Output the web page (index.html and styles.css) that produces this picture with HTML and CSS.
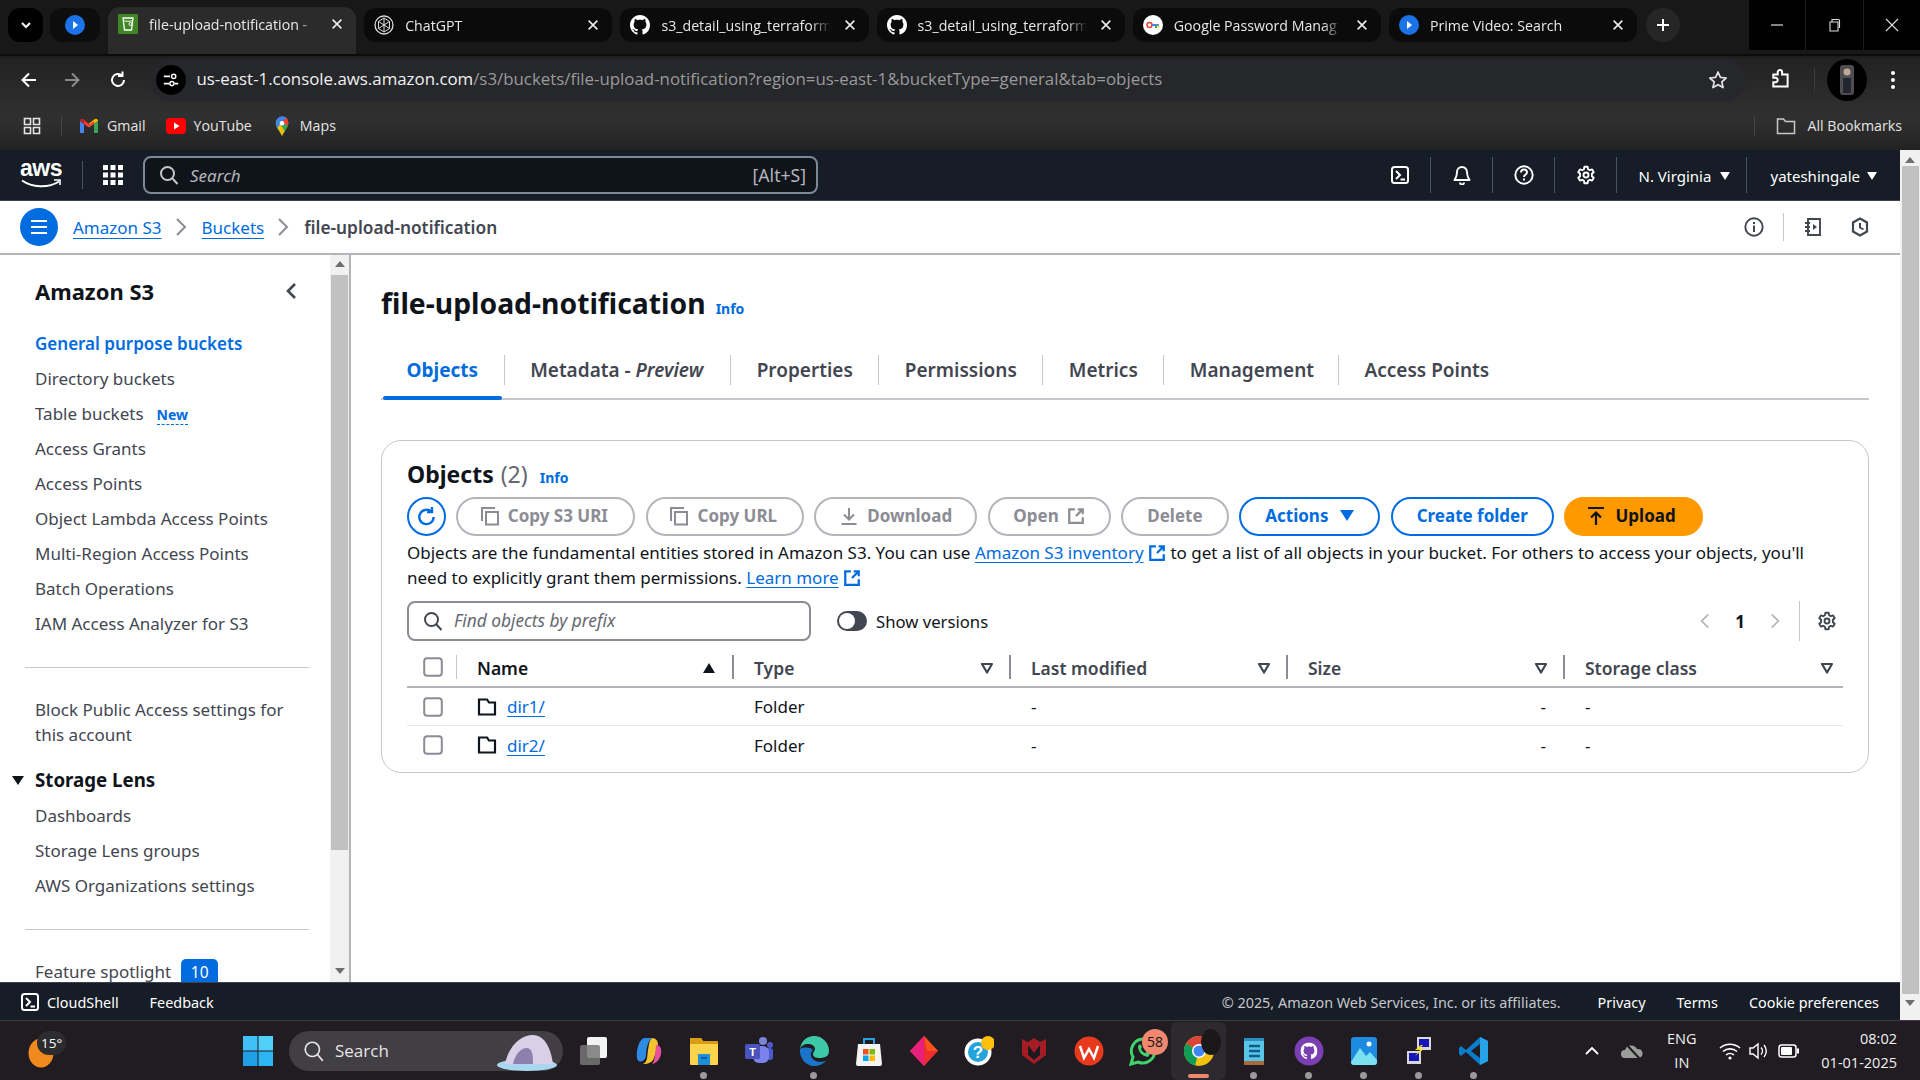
FILE: index.html
```html
<!DOCTYPE html>
<html lang="en">
<head>
<meta charset="utf-8">
<title>file-upload-notification</title>
<link rel="stylesheet" href="styles.css">
</head>
<body>
<svg class="sprite" aria-hidden="true">
  <symbol id="x" viewBox="0 0 16 16"><path d="M3 3l10 10M13 3L3 13" fill="none" stroke="currentColor" stroke-width="1.8"/></symbol>
  <symbol id="gh" viewBox="0 0 16 16"><path fill="currentColor" d="M8 0C3.58 0 0 3.58 0 8c0 3.54 2.29 6.53 5.47 7.59.4.07.55-.17.55-.38 0-.19-.01-.82-.01-1.49-2.01.37-2.53-.49-2.69-.94-.09-.23-.48-.94-.82-1.13-.28-.15-.68-.52-.01-.53.63-.01 1.08.58 1.23.82.72 1.21 1.87.87 2.33.66.07-.52.28-.87.51-1.07-1.78-.2-3.64-.89-3.64-3.95 0-.87.31-1.59.82-2.15-.08-.2-.36-1.02.08-2.12 0 0 .67-.21 2.2.82.64-.18 1.32-.27 2-.27.68 0 1.36.09 2 .27 1.53-1.04 2.2-.82 2.2-.82.44 1.1.16 1.92.08 2.12.51.56.82 1.27.82 2.15 0 3.07-1.87 3.75-3.65 3.95.29.25.54.73.54 1.48 0 1.07-.01 1.93-.01 2.2 0 .21.15.46.55.38A8.013 8.013 0 0016 8c0-4.42-3.58-8-8-8z"/></symbol>
  <symbol id="prime" viewBox="0 0 20 20"><circle cx="10" cy="10" r="10" fill="#1a73e8"/><path d="M8 6l5 4-5 4z" fill="#fff"/></symbol>
  <symbol id="term" viewBox="0 0 20 20"><rect x="2" y="2" width="16" height="16" rx="2.5" fill="none" stroke="currentColor" stroke-width="2"/><path d="M6 6l4 4-4 4M10.5 14.5H15" fill="none" stroke="currentColor" stroke-width="2"/></symbol>
  <symbol id="gear" viewBox="0 0 20 20"><path d="M8.4 1.8h3.2l.5 2.4 1.7 1 2.3-.8 1.6 2.8-1.8 1.6v2.4l1.8 1.6-1.6 2.8-2.3-.8-1.7 1-.5 2.4H8.4l-.5-2.4-1.7-1-2.3.8-1.6-2.8 1.8-1.6V8.800L2.300 7.200l1.600-2.800 2.300.8 1.700-1z" fill="none" stroke="currentColor" stroke-width="1.900" stroke-linejoin="round"/><circle cx="10" cy="10" r="2.500" fill="none" stroke="currentColor" stroke-width="1.900"/></symbol>
  <symbol id="ext" viewBox="0 0 16 16"><path d="M7 2H2v12h12V9M9.500 2H14v4.500M14 2L8 8" fill="none" stroke="currentColor" stroke-width="2"/></symbol>
  <symbol id="copy" viewBox="0 0 20 20"><path d="M2 15V2h13" fill="none" stroke="currentColor" stroke-width="2"/><rect x="6" y="6" width="12" height="12.500" fill="none" stroke="currentColor" stroke-width="2"/></symbol>
  <symbol id="filter" viewBox="0 0 14 12"><path d="M2 2h10L7 10.500z" fill="none" stroke="currentColor" stroke-width="2.200" stroke-linejoin="round"/></symbol>
  <symbol id="folder" viewBox="0 0 20 20"><path d="M2 2.500h8l2 3h6v12H2z" fill="none" stroke="currentColor" stroke-width="2.200"/></symbol>
  <symbol id="check" viewBox="0 0 20 20"><rect x="1.200" y="1.200" width="17.600" height="17.600" rx="3" fill="#fff" stroke="#8c8c94" stroke-width="2"/></symbol>
  <symbol id="chev" viewBox="0 0 12 20"><path d="M2 2l8 8-8 8" fill="none" stroke="currentColor" stroke-width="2"/></symbol>
</svg>

<header class="chrome">
  <div class="tabstrip">
    <div class="tabmenu"><svg viewBox="0 0 12 12" class="i12"><path d="M2 4l4 4 4-4" fill="none" stroke="#fff" stroke-width="2"/></svg></div>
    <div class="pintab"><svg class="i20"><use href="#prime"/></svg></div>
    <div class="tab active">
      <svg class="fav" viewBox="0 0 20 20"><rect width="20" height="20" rx="1" fill="#3f8624"/><path d="M5 4h10l-1.500 12h-7z" fill="none" stroke="#fff" stroke-width="1.300"/><path d="M5 6.500c3 1 7 1 10 0" fill="none" stroke="#fff"/><circle cx="12.500" cy="10" r="1.500" fill="none" stroke="#fff"/></svg>
      <span class="tabtitle">file-upload-notification - </span>
      <svg class="i14"><use href="#x"/></svg>
    </div>
    <div class="tab">
      <svg class="fav" viewBox="0 0 20 20"><circle cx="10" cy="10" r="9" fill="none" stroke="#ddd" stroke-width="1.300"/><path d="M10 3l5.500 3.500v7L10 17l-5.500-3.500v-7zM4.500 6.500L15.500 13.500M15.500 6.500L4.500 13.500M10 3v14" fill="none" stroke="#ddd"/></svg>
      <span class="tabtitle">ChatGPT</span>
      <svg class="i14"><use href="#x"/></svg>
    </div>
    <div class="tab">
      <svg class="fav"><use href="#gh"/></svg>
      <span class="tabtitle">s3_detail_using_terraform</span>
      <svg class="i14"><use href="#x"/></svg>
    </div>
    <div class="tab">
      <svg class="fav"><use href="#gh"/></svg>
      <span class="tabtitle">s3_detail_using_terraform</span>
      <svg class="i14"><use href="#x"/></svg>
    </div>
    <div class="tab">
      <svg class="fav" viewBox="0 0 20 20"><circle cx="10" cy="10" r="10" fill="#fff"/><circle cx="6.500" cy="10" r="2.500" fill="none" stroke="#ea4335" stroke-width="1.500"/><path d="M9 10h7" stroke="#4285f4" stroke-width="2"/><path d="M13 10v3" stroke="#34a853" stroke-width="2"/><path d="M15.500 10v2.500" stroke="#fbbc04" stroke-width="1.500"/></svg>
      <span class="tabtitle">Google Password Manag</span>
      <svg class="i14"><use href="#x"/></svg>
    </div>
    <div class="tab">
      <svg class="fav"><use href="#prime"/></svg>
      <span class="tabtitle">Prime Video: Search</span>
      <svg class="i14"><use href="#x"/></svg>
    </div>
    <div class="newtab"><svg viewBox="0 0 14 14" class="i14"><path d="M7 1v12M1 7h12" stroke="#fff" stroke-width="2"/></svg></div>
    <div class="winctl">
      <span class="winbtn"><svg viewBox="0 0 14 14" class="i14"><path d="M1 7h12" stroke="#ddd" stroke-width="1.200"/></svg></span>
      <span class="winbtn"><svg viewBox="0 0 14 14" class="i14"><path d="M3 4h8v9H3zM5 4V1.500h6.500a1 1 0 011 1V10" fill="none" stroke="#ddd" stroke-width="1.100"/></svg></span>
      <span class="winbtn"><svg viewBox="0 0 14 14" class="i14"><path d="M1 1l12 12M13 1L1 13" stroke="#ddd" stroke-width="1.100"/></svg></span>
    </div>
  </div>
  <div class="addressrow">
    <svg class="navicon" viewBox="0 0 20 20"><path d="M17 10H4M10 3.500L3.500 10l6.500 6.500" fill="none" stroke="#fff" stroke-width="2"/></svg>
    <svg class="navicon" viewBox="0 0 20 20"><path d="M3 10h13M10 3.500l6.500 6.500-6.500 6.500" fill="none" stroke="#8b8b8b" stroke-width="2"/></svg>
    <svg class="navicon" viewBox="0 0 20 20"><path d="M16 10a6 6 0 11-2-4.500M14.500 1.500v4.500H10" fill="none" stroke="#fff" stroke-width="2"/></svg>
    <div class="omnibox">
      <span class="sitectl"><svg viewBox="0 0 20 20" class="i18"><path d="M2 6h7M14 14h4M2 14h6" stroke="#fff" stroke-width="1.800"/><circle cx="13" cy="6" r="2.300" fill="none" stroke="#fff" stroke-width="1.600"/><circle cx="11" cy="14" r="2.300" fill="none" stroke="#fff" stroke-width="1.600"/></svg></span>
      <span class="url"><b>us-east-1.console.aws.amazon.com</b>/s3/buckets/file-upload-notification?region=us-east-1&amp;bucketType=general&amp;tab=objects</span>
      <svg class="star" viewBox="0 0 20 20"><path d="M10 2l2.400 5.400 5.800.6-4.400 3.900 1.300 5.700L10 14.700l-5.100 2.900 1.300-5.700L1.800 8l5.800-.6z" fill="none" stroke="#e4e4e4" stroke-width="1.700" stroke-linejoin="round"/></svg>
    </div>
    <svg class="puzzle" viewBox="0 0 20 20"><path d="M3 5h4V3a2 2 0 014 0v2h5v11H3v-4h2a2 2 0 000-4H3z" fill="none" stroke="#fff" stroke-width="1.800"/></svg>
    <span class="vsep"></span>
    <span class="avatar"><svg viewBox="0 0 14 30" class="avatar-img"><rect width="14" height="30" rx="3" fill="#4d4d52"/><circle cx="7" cy="7" r="3.500" fill="#c0a898"/><path d="M3 13h8v15H3z" fill="#23262e"/></svg></span>
    <svg class="kebab" viewBox="0 0 4 20"><circle cx="2" cy="3" r="2" fill="#fff"/><circle cx="2" cy="10" r="2" fill="#fff"/><circle cx="2" cy="17" r="2" fill="#fff"/></svg>
  </div>
  <div class="bookmarks">
    <svg class="appsicon" viewBox="0 0 18 18"><path d="M1.500 1.500h6v6h-6zM10.500 1.500h6v6h-6zM1.500 10.500h6v6h-6zM10.500 10.500h6v6h-6z" fill="none" stroke="#e5e5e5" stroke-width="1.600"/></svg>
    <span class="bmsep"></span>
    <span class="bm bmfirst"><svg viewBox="0 0 20 16" class="bmi"><path d="M1 15V3l4 3v9z" fill="#4285f4"/><path d="M19 15V3l-4 3v9z" fill="#34a853"/><path d="M1 3c0-2 2-3 3.500-1.800L10 5.500l-1 3.500L1 3z" fill="#c5221f"/><path d="M19 3c0-2-2-3-3.500-1.800L10 5.500V9l9-6z" fill="#fbbc04"/><path d="M5 6l5 3.500L15 6v-3l-5 3.500L5 3z" fill="#ea4335"/></svg>Gmail</span>
    <span class="bm"><svg viewBox="0 0 20 16" class="bmi"><rect width="20" height="16" rx="4" fill="#f00"/><path d="M8 4.500l5.500 3.500L8 11.500z" fill="#fff"/></svg>YouTube</span>
    <span class="bm"><svg viewBox="0 0 16 22" class="bmi"><path d="M8 22C4 15 1 12 1 8a7 7 0 0114 0c0 4-3 7-7 14z" fill="#34a853"/><path d="M3 3a7 7 0 0110-1L3 13C1.500 10.500 .5 6 3 3z" fill="#4285f4"/><path d="M13 2a7 7 0 012 6c0 1-.3 2-.8 3L8 6z" fill="#ea4335"/><path d="M3 13c1.500 2.500 3.500 5 5 9 1-2.500 2-4 3-5.500L6 9z" fill="#fbbc04"/><circle cx="8" cy="8" r="2.500" fill="#fff"/></svg>Maps</span>
    <span class="bmspace"></span>
    <span class="bmsep"></span>
    <span class="bm allbm"><svg viewBox="0 0 20 18" class="bmf"><path d="M1.500 2h6l2 2.500h9v12h-17z" fill="none" stroke="#c8c8c8" stroke-width="1.500"/></svg>All Bookmarks</span>
  </div>
</header>

<div class="viewport">
  <div class="page">
    <div class="awsbar">
      <div class="awslogo"><span class="awsword">aws</span><svg viewBox="0 0 40 10" class="smile"><path d="M1 1.500c10 7 26 8 37 1" fill="none" stroke="#fff" stroke-width="2"/><path d="M33 1h6v5" fill="none" stroke="#fff" stroke-width="1.600"/></svg></div>
      <span class="hsep logosep"></span>
      <svg class="waffle" viewBox="0 0 20 20"><path fill="#fff" d="M0 0h5v5H0zM7.500 0h5v5h-5zM15 0h5v5h-5zM0 7.500h5v5H0zM7.500 7.500h5v5h-5zM15 7.500h5v5h-5zM0 15h5v5H0zM7.500 15h5v5h-5zM15 15h5v5h-5z"/></svg>
      <div class="awssearch">
        <svg class="i20 s-ic" viewBox="0 0 20 20"><circle cx="8.500" cy="8.500" r="6.500" fill="none" stroke="#c6c6cd" stroke-width="2"/><path d="M13 13l5.500 6" stroke="#c6c6cd" stroke-width="2"/></svg>
        <span class="s-text">Search</span>
        <span class="s-key">[Alt+S]</span>
      </div>
      <div class="awsright">
        <span class="hbtn"><svg class="i20"><use href="#term"/></svg></span>
        <span class="hbtn"><svg class="i20" viewBox="0 0 20 20"><path d="M10 2a5 5 0 00-5 5c0 5-2 7-2.500 8h15C17 14 15 12 15 7a5 5 0 00-5-5zM8 17.500a2 2 0 004 0" fill="none" stroke="#fff" stroke-width="1.900" stroke-linejoin="round"/></svg></span>
        <span class="hbtn"><svg class="i20" viewBox="0 0 20 20"><circle cx="10" cy="10" r="8.700" fill="none" stroke="#fff" stroke-width="1.900"/><path d="M7 7.500a3 3 0 116 0c0 2-3 2-3 4.500M10 13.500v2" fill="none" stroke="#fff" stroke-width="1.900"/></svg></span>
        <span class="hbtn"><svg class="i20"><use href="#gear"/></svg></span>
        <span class="hmenu region">N. Virginia<i class="caret"></i></span>
        <span class="hmenu user">yateshingale<i class="caret"></i></span>
      </div>
    </div>

    <div class="crumbbar">
      <span class="burger"><svg viewBox="0 0 20 16" class="i20b"><path d="M2 2h16M2 8h16M2 14h16" stroke="#fff" stroke-width="2.200"/></svg></span>
      <a class="clink">Amazon S3</a>
      <svg class="cchev"><use href="#chev"/></svg>
      <a class="clink">Buckets</a>
      <svg class="cchev"><use href="#chev"/></svg>
      <span class="ccur">file-upload-notification</span>
      <div class="crumbright">
        <svg class="i20 cr-a" viewBox="0 0 20 20"><circle cx="10" cy="10" r="8.700" fill="none" stroke="#424650" stroke-width="1.900"/><path d="M10 8.500V15M10 5v2" stroke="#424650" stroke-width="2"/></svg>
        <span class="crsep"></span>
        <svg class="i20 cr-b" viewBox="0 0 20 20"><path d="M5 2h12v16H5zM2 6h5M2 10h5M2 14h5" fill="none" stroke="#424650" stroke-width="1.900"/><path d="M10 7l4 3-4 3z" fill="#424650"/></svg>
        <svg class="i20 cr-c" viewBox="0 0 20 20"><path d="M10 1.500l7 4v9l-7 4-7-4v-9z" fill="none" stroke="#424650" stroke-width="2.200"/><path d="M10 6v4.500l3.500 2" fill="none" stroke="#424650" stroke-width="2"/></svg>
      </div>
    </div>

    <div class="workspace">
      <aside class="sidenav">
        <div class="navpane">
          <div class="navhead"><span class="navtitle">Amazon S3</span><svg class="navclose" viewBox="0 0 12 20"><path d="M10 3L3 10l7 7" fill="none" stroke="#424650" stroke-width="2.600"/></svg></div>
          <ul class="navlist first">
            <li class="cur">General purpose buckets</li>
            <li>Directory buckets</li>
            <li>Table buckets<span class="newtag">New</span></li>
            <li>Access Grants</li>
            <li>Access Points</li>
            <li>Object Lambda Access Points</li>
            <li>Multi-Region Access Points</li>
            <li>Batch Operations</li>
            <li>IAM Access Analyzer for S3</li>
          </ul>
          <hr class="navdiv d1">
          <p class="navblock">Block Public Access settings for this account</p>
          <div class="navsec"><i class="sectri"></i>Storage Lens</div>
          <ul class="navlist lens">
            <li>Dashboards</li>
            <li>Storage Lens groups</li>
            <li>AWS Organizations settings</li>
          </ul>
          <hr class="navdiv d2">
          <div class="navfeat">Feature spotlight<span class="countbadge">10</span></div>
        </div>
        <div class="navscroll"><i class="sb-up"></i><span class="navthumb"></span><i class="sb-down"></i></div>
      </aside>

      <main class="content">
        <div class="titlerow"><h1>file-upload-notification</h1><a class="info">Info</a></div>
        <nav class="tabs">
          <a class="ctab on">Objects</a>
          <a class="ctab">Metadata - <em>Preview</em></a>
          <a class="ctab">Properties</a>
          <a class="ctab">Permissions</a>
          <a class="ctab">Metrics</a>
          <a class="ctab">Management</a>
          <a class="ctab">Access Points</a>
        </nav>

        <section class="card">
          <div class="cardhead"><h2>Objects</h2><span class="count">(2)</span><a class="info">Info</a></div>
          <div class="actions">
            <span class="btn refresh"><svg viewBox="0 0 20 20" class="i22"><path d="M16 10a6.500 6.500 0 11-2.300-5M14.500 1v4.500H10" fill="none" stroke="#006ce0" stroke-width="2.200"/></svg></span>
            <span class="btn off b-uri"><svg class="i20"><use href="#copy"/></svg>Copy S3 URI</span>
            <span class="btn off b-url"><svg class="i20"><use href="#copy"/></svg>Copy URL</span>
            <span class="btn off b-dl"><svg class="i20" viewBox="0 0 20 20"><path d="M10 2v11M5 8.500l5 5 5-5M2.500 18h15" fill="none" stroke="currentColor" stroke-width="2"/></svg>Download</span>
            <span class="btn off b-open">Open<svg class="i18"><use href="#ext"/></svg></span>
            <span class="btn off b-del">Delete</span>
            <span class="btn blue b-act">Actions<i class="bluecaret"></i></span>
            <span class="btn blue b-new">Create folder</span>
            <span class="btn primary b-up"><svg class="i20" viewBox="0 0 20 20"><path d="M2 2h16M10 19V7M5 11.500l5-5 5 5" fill="none" stroke="#0f141a" stroke-width="2.200"/></svg>Upload</span>
          </div>
          <p class="desc">Objects are the fundamental entities stored in Amazon S3. You can use <a class="dl">Amazon S3 inventory</a> <svg class="i18 linkext"><use href="#ext"/></svg> to get a list of all objects in your bucket. For others to access your objects, you'll<br>need to explicitly grant them permissions. <a class="dl">Learn more</a> <svg class="i18 linkext"><use href="#ext"/></svg></p>
          <div class="filterrow">
            <div class="findbox"><svg class="i20" viewBox="0 0 20 20"><circle cx="8.500" cy="8.500" r="6.500" fill="none" stroke="#424650" stroke-width="2"/><path d="M13 13l5.500 6" stroke="#424650" stroke-width="2"/></svg><span>Find objects by prefix</span></div>
            <span class="toggle"><i></i></span><span class="togglelabel">Show versions</span>
            <div class="pager">
              <svg class="pchev flip"><use href="#chev"/></svg>
              <b>1</b>
              <svg class="pchev"><use href="#chev"/></svg>
              <span class="psep"></span>
              <svg class="i20 pgear"><use href="#gear"/></svg>
            </div>
          </div>
          <div class="table">
            <div class="tr th">
              <div class="c0"><svg class="i20"><use href="#check"/></svg></div>
              <div class="cc strong"><span>Name</span><i class="sortup"></i></div>
              <div class="cc"><span>Type</span><svg class="fi"><use href="#filter"/></svg></div>
              <div class="cc"><span>Last modified</span><svg class="fi"><use href="#filter"/></svg></div>
              <div class="cc"><span>Size</span><svg class="fi"><use href="#filter"/></svg></div>
              <div class="cc lastc"><span>Storage class</span><svg class="fi"><use href="#filter"/></svg></div>
            </div>
            <div class="tr td">
              <div class="c0"><svg class="i20"><use href="#check"/></svg></div>
              <div class="dc"><svg class="i20 ficon"><use href="#folder"/></svg><a class="dl">dir1/</a></div>
              <div class="dc">Folder</div>
              <div class="dc">-</div>
              <div class="dc right">-</div>
              <div class="dc">-</div>
            </div>
            <div class="tr td noline">
              <div class="c0"><svg class="i20"><use href="#check"/></svg></div>
              <div class="dc"><svg class="i20 ficon"><use href="#folder"/></svg><a class="dl">dir2/</a></div>
              <div class="dc">Folder</div>
              <div class="dc">-</div>
              <div class="dc right">-</div>
              <div class="dc">-</div>
            </div>
          </div>
        </section>
      </main>
    </div>

    <footer class="awsfoot">
      <svg class="i20 ft-ic"><use href="#term"/></svg>
      <span class="ft-l">CloudShell</span>
      <span class="ft-l ft-fb">Feedback</span>
      <span class="ft-copy">© 2025, Amazon Web Services, Inc. or its affiliates.</span>
      <span class="ft-r ft-priv">Privacy</span>
      <span class="ft-r">Terms</span>
      <span class="ft-r">Cookie preferences</span>
    </footer>
  </div>
  <div class="pagescroll"><i class="sb-up"></i><span class="pagethumb"></span><i class="sb-down"></i></div>
</div>

<div class="taskbar">
  <div class="weather"><svg viewBox="0 0 26 30" class="wsun"><ellipse cx="13" cy="15" rx="12.500" ry="14.500" fill="#f08a1d"/></svg><span class="temp">15°</span></div>
  <span class="ts-start"><svg viewBox="0 0 30 30" class="tb30"><path d="M0 0h14.500v14.500H0z" fill="#3fc1f5"/><path d="M15.500 0H30v14.500H15.500z" fill="#50d0fb"/><path d="M0 15.500h14.500V30H0z" fill="#1f9fe6"/><path d="M15.500 15.500H30V30H15.500z" fill="#2db4f2"/></svg></span>
  <div class="ts-search">
    <svg class="i22" viewBox="0 0 20 20"><circle cx="8.500" cy="8.500" r="6.500" fill="none" stroke="#e6e6e6" stroke-width="1.500"/><path d="M13 13l5 6" stroke="#e6e6e6" stroke-width="1.500"/></svg>
    <span>Search</span>
    <svg class="bear" viewBox="0 0 64 40"><ellipse cx="32" cy="34" rx="30" ry="6" fill="#a9d8ee"/><path d="M10 33C14 14 26 4 38 4s18 14 20 29z" fill="#d9cfe6"/><path d="M18 33c2-10 8-16 14-16s6 10 6 16z" fill="#8f7fae"/></svg>
  </div>
  <div class="ts-apps">
    <span class="app"><svg viewBox="0 0 30 30" class="tb30"><rect x="8" y="1" width="20" height="21" rx="2" fill="#f3f3f3"/><rect x="1" y="9" width="20" height="20" rx="2" fill="#777" opacity=".85"/></svg></span>
    <span class="app"><svg viewBox="0 0 30 30" class="tb30"><path d="M10 2h8c-4 3-6 10-6 18-1 6-8 8-9 2-1-8 2-18 7-20z" fill="#2f8ae6"/><path d="M18 2c4 0 6 3 6 7l-4 13c-2 6-9 6-11 6 5-2 4-9 5-14s1-9 4-12z" fill="#f4c430"/><path d="M22 9c4 0 6 3 5 9-1 5-4 9-9 10 3-3 3-9 4-19z" fill="#e9509c"/></svg></span>
    <span class="app dot"><svg viewBox="0 0 30 30" class="tb30"><path d="M1 2h11l2 3h15v23a1 1 0 01-1 1H2a1 1 0 01-1-1z" fill="#fbd34c"/><path d="M1 2h11l2 3h15v3H1z" fill="#d99c14"/><rect x="9" y="18" width="12" height="11" fill="#1f8ed6"/><rect x="12" y="21" width="6" height="2" fill="#0b5fa3"/></svg></span>
    <span class="app"><svg viewBox="0 0 30 30" class="tb30"><circle cx="19" cy="5" r="4" fill="#7b83d9"/><circle cx="26" cy="9" r="3" fill="#5059c9"/><rect x="20" y="12" width="9" height="12" rx="3" fill="#5059c9"/><rect x="9" y="10" width="16" height="17" rx="6" fill="#7b83eb"/><rect x="1" y="8" width="15" height="15" rx="1.500" fill="#4b53bc"/><text x="8.500" y="19.500" class="teams">T</text></svg></span>
    <span class="app dot"><svg viewBox="0 0 30 30" class="tb30"><path d="M15 0a15 15 0 0115 15c0 5-4 7-9 7-4 0-7-1-7-4 0-2 2-3 2-5 0-3-3-5-7-5-4 0-7 2-8 5C2 5 8 0 15 0z" fill="#3bc9a6"/><path d="M1 13C0 22 7 30 15 30c5 0 9-2 12-5-3 1-11 2-14-3-2-3-1-6 1-8-3-3-10-3-13-1z" fill="#1a74c9"/></svg></span>
    <span class="app"><svg viewBox="0 0 30 30" class="tb30"><path d="M4 8h22l2 20a2 2 0 01-2 2H4a2 2 0 01-2-2z" fill="#f4f4f4"/><path d="M10 8V3h10v5" fill="none" stroke="#25a0e0" stroke-width="2"/><path d="M9 13h5.500v5.500H9z" fill="#f25022"/><path d="M15.500 13H21v5.500h-5.500z" fill="#7fba00"/><path d="M9 19.500h5.500V25H9z" fill="#00a4ef"/><path d="M15.500 19.500H21V25h-5.500z" fill="#ffb900"/></svg></span>
    <span class="app"><svg viewBox="0 0 30 30" class="tb30"><path d="M15 0l14 15-14 15L1 15z" fill="#ef2d2d"/><path d="M15 0L1 15l14 15z" fill="#e6207b"/><path d="M15 0l14 15H18z" fill="#f7541c"/></svg></span>
    <span class="app"><svg viewBox="0 0 30 30" class="tb30"><circle cx="14" cy="16" r="13.500" fill="#fff"/><circle cx="14" cy="16" r="10" fill="#25a3dc"/><text x="14" y="22" class="helpq">?</text><circle cx="24" cy="7" r="7" fill="#fdbf0c"/></svg></span>
    <span class="app"><svg viewBox="0 0 30 30" class="tb30"><path d="M3 3l6 3 6-4 6 4 6-3v16l-12 9L3 19z" fill="#a51c24"/><path d="M9 9l6 8 6-8v10l-6 5-6-5z" fill="#1d191f"/></svg></span>
    <span class="app"><svg viewBox="0 0 30 30" class="tb30"><circle cx="15" cy="15" r="14.500" fill="#e9391d"/><path d="M6 10l4 12 5-9 5 9 4-12" fill="none" stroke="#fff" stroke-width="2.500"/></svg></span>
    <span class="app"><svg viewBox="0 0 30 30" class="tb30"><path d="M14 3a12 12 0 00-10 18L2 28l7-2A12 12 0 1014 3z" fill="none" stroke="#3ed36b" stroke-width="3"/><path d="M9 10c0 6 4 10 10 11l2-3-3-2-2 1c-2-1-3-2-4-4l1-2-2-3z" fill="#3ed36b"/></svg><span class="wa-badge">58</span></span>
    <span class="app chromeapp"><svg viewBox="0 0 30 30" class="tb30"><circle cx="15" cy="15" r="15" fill="#f4c20d"/><path d="M15 15L2 7.500A15 15 0 0115 0h13a15 15 0 012 15z" fill="#db4437"/><path d="M15 15L2 7.500A15 15 0 0011 29.500z" fill="#0f9d58"/><circle cx="15" cy="15" r="7" fill="#fff"/><circle cx="15" cy="15" r="5.500" fill="#4285f4"/></svg><span class="chromeprof"></span><i class="chromebar"></i></span>
    <span class="app dot"><svg viewBox="0 0 30 30" class="tb30"><rect x="5" y="3" width="20" height="24" fill="#5bc5e8"/><path d="M5 25h20v4H5z" fill="#a96a3a"/><path d="M5 2h20v3H5z" fill="#2a90c4"/><path d="M10 10h11M10 15h11M10 20h11" stroke="#0d5e8b" stroke-width="2.500"/></svg></span>
    <span class="app dot"><svg viewBox="0 0 30 30" class="tb30"><circle cx="15" cy="15" r="14.500" fill="#7a3fb0"/><g transform="translate(6.500 6.500) scale(1.060)"><use href="#gh" width="16" height="16" class="ghwhite"/></g></svg></span>
    <span class="app dot"><svg viewBox="0 0 30 30" class="tb30"><rect x="2" y="1" width="26" height="28" rx="3" fill="#1c8be0"/><path d="M2 26l9-14 6 8 4-4 7 8v2a3 3 0 01-3 3H5a3 3 0 01-3-3z" fill="#7be0f0"/><circle cx="20" cy="8" r="2.500" fill="#fff"/></svg></span>
    <span class="app dot"><svg viewBox="0 0 30 30" class="tb30"><rect x="13" y="1" width="14" height="13" fill="#d8d8d8"/><rect x="15" y="3" width="10" height="8" fill="#1616b8"/><rect x="3" y="15" width="14" height="13" fill="#d8d8d8"/><rect x="5" y="17" width="10" height="8" fill="#1616b8"/><path d="M17 9l-6 5h5l-5 6 9-7h-5l4-4z" fill="#f4e51a"/></svg></span>
    <span class="app dot"><svg viewBox="0 0 30 30" class="tb30"><path d="M21 1l8 4v20l-8 4L7 16l-5 4-2-2v-6l2-2 5 4z" fill="#0a7ccb"/><path d="M21 1l8 4v20l-8 4z" fill="#27a3ea"/><path d="M21 8L12 15l9 7z" fill="#201c22"/></svg></span>
  </div>
  <div class="tray">
    <svg class="tr-caret" viewBox="0 0 14 10"><path d="M1 8l6-6 6 6" fill="none" stroke="#fff" stroke-width="1.800"/></svg>
    <svg class="tr-cloud" viewBox="0 0 24 18"><path d="M5 16a4 4 0 010-8 6.500 6.500 0 0112-1 4.500 4.500 0 012 9z" fill="#9c9c9c"/><path d="M5 1l15 16" stroke="#201c22" stroke-width="2"/></svg>
    <span class="tr-lang">ENG<br>IN</span>
    <svg class="tr-wifi" viewBox="0 0 22 18"><path d="M1 6a15 15 0 0120 0M4 9.500a10.500 10.500 0 0114 0M7 13a6 6 0 018 0" fill="none" stroke="#fff" stroke-width="1.600"/><circle cx="11" cy="16" r="1.600" fill="#fff"/></svg>
    <svg class="tr-vol" viewBox="0 0 22 20"><path d="M2 7h3l5-4v14l-5-4H2z" fill="none" stroke="#fff" stroke-width="1.400"/><path d="M13 6.500a5 5 0 010 7M16 4a9 9 0 010 12" fill="none" stroke="#fff" stroke-width="1.400"/></svg>
    <svg class="tr-bat" viewBox="0 0 22 14"><rect x="1" y="1" width="17" height="12" rx="2.500" fill="none" stroke="#fff" stroke-width="1.500"/><rect x="3" y="3" width="11" height="8" rx="1" fill="#fff"/><rect x="19" y="4.500" width="2" height="5" fill="#fff"/></svg>
    <span class="tr-clock">08:02<br>01-01-2025</span>
  </div>
</div>
</body>
</html>
```
FILE: styles.css
```css
*{box-sizing:border-box}
html,body{margin:0;height:1080px;overflow:hidden}
body{display:flex;flex-direction:column;width:1920px;font-family:"Noto Sans",sans-serif;font-size:17px;color:#0f141a;background:#fff}
.sprite{display:none}
a{color:inherit}
ul{list-style:none;margin:0;padding:0}
.i12{width:12px;height:12px}.i14{width:14px;height:14px}.i18{width:18px;height:18px}.i20{width:20px;height:20px}.i22{width:22px;height:22px}
.i20b{width:20px;height:16px}

/* browser */
.chrome{height:150px;background:linear-gradient(#1c1c1c 0,#1c1c1c 56px,#232323 60px,#303030 120px,#222 150px);color:#e6e6e6;font-family:"Open Sans",sans-serif}
.tabstrip{display:flex;height:56px;align-items:flex-start;padding-top:8px;padding-left:8px;border-bottom:2px solid #0c0c0c;position:relative;background:#181818}
.tabmenu{width:35px;height:34px;background:#000;border-radius:12px;display:flex;align-items:center;justify-content:center;margin-right:7px}
.pintab{width:50px;height:34px;background:#0d0d0d;border-radius:12px;display:flex;align-items:center;justify-content:center;margin-right:8px}
.tab{width:248.2px;flex:none;height:34px;margin-right:8px;border-radius:12px;background:#0b0b0b;display:flex;align-items:center;padding:0 10px;font-size:14.2px;color:#e8e8e8}
.tab.active{height:47px;margin-top:-1px;padding-bottom:13px;background:#2b2b2b;border-radius:12px 12px 0 0}
.fav{width:20px;height:20px;flex:none;margin-right:11px;color:#fff}
.tabtitle{flex:1;white-space:nowrap;overflow:hidden;-webkit-mask-image:linear-gradient(90deg,#000 88%,transparent);mask-image:linear-gradient(90deg,#000 88%,transparent)}
.tab .i14{flex:none;margin:0 2px 0 12px;color:#eee}
.newtab{width:34px;height:34px;border-radius:50%;background:#262626;display:flex;align-items:center;justify-content:center;margin-left:1px;flex:none}
.winctl{position:absolute;right:0;top:0;height:50px;width:172px;background:#000;display:flex}
.winbtn{flex:1;display:flex;align-items:center;justify-content:center;border-left:1px solid #1c1c1c}
.addressrow{height:47px;display:flex;align-items:center;padding-left:19px}
.navicon{width:20px;height:20px;margin-right:23px;flex:none}
.navicon:nth-child(2){margin-right:26px}
.navicon:nth-child(3){margin-right:22px}
.omnibox{width:1596px;height:42px;border-radius:21px;background:#25272b;display:flex;align-items:center;padding:0 18px 0 6px;flex:none}
.sitectl{width:30px;height:30px;border-radius:50%;background:#000;display:flex;align-items:center;justify-content:center;margin-right:10.5px}
.url{flex:1;font-size:16.85px;color:#9a9a9a;white-space:nowrap;overflow:hidden;padding-bottom:2px}
.url b{font-weight:400;color:#f0f0f0}
.star{width:20px;height:20px}
.puzzle{width:22px;height:24px;margin-left:24px}
.vsep{width:1px;height:24px;background:#3c3c3c;margin-left:22px}
.avatar{width:40px;height:42px;border-radius:50%;background:#000;display:flex;align-items:center;justify-content:center;margin-left:12px}
.avatar-img{width:14px;height:30px}
.kebab{width:4px;height:20px;margin-left:24px}
.bookmarks{height:47px;display:flex;align-items:center;padding:0 0 2px 23px;font-size:14.2px;color:#e4e4e4}
.appsicon{width:18px;height:18px;margin-right:20px}
.bmsep{width:1px;height:20px;background:#444}
.bm{display:flex;align-items:center;margin-left:20px}
.bmfirst{margin-left:17px}
.bmi{width:20px;height:20px;margin-right:8px}
.bmspace{flex:1}
.bookmarks .allbm{margin-left:21px;margin-right:18px}
.bmf{width:20px;height:18px;margin-right:11px}

/* page */
.viewport{height:870px;display:flex}
.page{width:1900px;display:flex;flex-direction:column}
.pagescroll{width:20px;background:#f1f1f1;display:flex;flex-direction:column;align-items:center;position:relative}
.pagethumb{width:17px;height:828px;background:#c1c1c1;margin-top:3px}
.pagescroll .sb-up{margin-top:7px}
.pagescroll .sb-down{margin-top:6px}
.sb-up{width:0;height:0;border:5px solid transparent;border-top:0;border-bottom:6px solid #6e6e6e}
.sb-down{width:0;height:0;border:5px solid transparent;border-bottom:0;border-top:6px solid #6e6e6e}

.awsbar{height:51px;background:#161d26;display:flex;align-items:center;color:#fff;border-bottom:1px solid #3a4350;flex:none}
.awslogo{width:40px;margin-left:21px;display:flex;flex-direction:column;align-items:center;height:36px;position:relative}
.awsword{font:700 23px/22px "Liberation Sans",sans-serif;letter-spacing:-.5px;color:#fff}
.smile{width:40px;height:10px}
.hsep{width:1px;height:28px;background:#4a5361}
.logosep{margin-left:21px}
.waffle{width:20px;height:20px;margin-left:20px}
.awssearch{width:675px;height:38px;margin-left:20px;background:#0f141a;border:2px solid #7d8998;border-radius:8px;display:flex;align-items:center;padding:0 10px 0 14px;font-size:17px;color:#b4b4bb}
.s-ic{margin-right:11px}
.s-text{font-style:italic;flex:1}
.s-key{font-size:17.6px}
.awsright{display:flex;margin-left:auto;align-items:center;height:100%;padding-right:23px}
.hbtn{width:62px;height:36px;border-right:1px solid #4a5361;display:flex;align-items:center;justify-content:center;position:relative;left:2px}
.hmenu{display:flex;align-items:center;font-size:15px;color:#fff;height:36px;padding:2px 0 0 23px}
.region{width:132px;border-right:1px solid #4a5361}
.caret{width:0;height:0;border:5.500px solid transparent;border-bottom:0;border-top:8px solid #fff;margin-left:9px}
.user .caret{margin-left:7px}
.crumbbar{height:54px;flex:none;background:#fff;border-bottom:2px solid #b4b4bb;display:flex;align-items:center;padding-left:20px;font-size:17px}
.burger{width:38px;height:38px;border-radius:50%;background:#006ce0;display:flex;align-items:center;justify-content:center;margin-right:15px}
.clink{color:#006ce0;text-decoration:underline;text-underline-offset:4px}
.cchev{width:12px;height:20px;margin:0 15px 0 13px;color:#8c8c94}
.ccur{color:#424650;font-weight:600;font-size:17.3px}
.crumbright{display:flex;margin-left:auto;align-items:center;padding-right:30px}
.crsep{width:1px;height:28px;background:#c6c6cd;margin:0 19px}
.cr-c{margin-left:27px}

.workspace{height:727px;display:flex;flex:none;overflow:hidden}
.sidenav{width:351px;flex:none;display:flex;border-right:2px solid #b4b4bb;height:727px}
.navpane{width:330px;padding-top:21px;overflow:hidden;height:727px}
.navscroll{width:19px;background:#f1f1f1;display:flex;flex-direction:column;align-items:center}
.navscroll .sb-up{margin-top:6px}
.navthumb{width:17px;height:575px;background:#c1c1c1;margin-top:8px}
.navscroll .sb-down{margin-top:auto;margin-bottom:8px}
.navhead{display:flex;align-items:center;justify-content:space-between;padding:0 35px;height:30px}
.navtitle{font-size:22px;font-weight:700;color:#0f141a}
.navclose{width:12px;height:20px;margin-right:-2px}
.navlist li{height:35px;line-height:35px;padding-left:35px;color:#424650;white-space:nowrap}
.navlist.first{margin-top:20px}
.navlist.lens{margin-top:1px}
.navlist .cur{color:#006ce0;font-weight:600}
.newtag{color:#006ce0;font-size:14px;font-weight:700;margin-left:13px;border-bottom:1px dashed #006ce0}
.navdiv{border:0;border-top:1px solid #c6c6cd;margin:0 21px 0 25px;height:1px}
.d1{margin-top:26px}
.d2{margin-top:26px}
.navblock{margin:29px 35px 0;line-height:25px;color:#424650;width:265px}
.navsec{margin-top:15px;height:35px;line-height:35px;padding-left:35px;font-weight:700;position:relative;font-size:18.7px}
.sectri{position:absolute;left:12px;top:14px;width:0;height:0;border:6.500px solid transparent;border-bottom:0;border-top:9px solid #0f141a}
.navfeat{margin-top:24px;padding-left:35px;height:35px;line-height:35px;color:#424650;display:flex}
.countbadge{margin-left:10px;width:37px;height:24px;line-height:26px;margin-top:5px;background:#006ce0;color:#fff;border-radius:5px 5px 0 0;text-align:center;font-size:15.5px}

.content{flex:1;padding:28px 31px 0 30px;min-width:0}
.titlerow{display:flex;align-items:baseline;height:40px;line-height:40px}
h1{margin:0;font-size:28.3px;font-weight:700}
.info{color:#006ce0;font-size:14px;font-weight:700;margin-left:10px}
.cardhead .info{margin-left:12px}
.tabs{margin-top:17px;height:60px;padding-top:2px;display:flex;align-items:center;border-bottom:2px solid #c6c6cd;position:relative}
.ctab{padding:0 25.5px;height:30px;line-height:30px;font-size:19px;font-weight:600;color:#424650;border-right:1px solid #c6c6cd;white-space:nowrap;position:relative}
.ctab:last-child{border-right:0}
.ctab:nth-child(2){padding-right:27px}
.ctab:nth-child(6){padding-right:24px}
.ctab.on{color:#006ce0;font-weight:700;border-right:1px solid #c6c6cd}
.ctab.on::after{content:"";position:absolute;left:2px;right:2px;bottom:-15px;height:4px;background:#006ce0;border-radius:2px}
.ctab em{font-style:italic}
.card{margin-top:40px;height:333px;border:1.500px solid #c6c6cd;border-radius:20px;padding:18px 25px 0}
.cardhead{display:flex;align-items:baseline;height:30px;line-height:30px}
h2{margin:0;font-size:23px;font-weight:700}
.count{font-size:23px;color:#656871;margin-left:7px}
.actions{margin-top:8px;display:flex;gap:10.4px;height:39px}
.btn{height:39px;border-radius:20px;border:2.500px solid;display:flex;align-items:center;justify-content:center;font-weight:700;font-size:17px;white-space:nowrap;padding-bottom:2px}
.refresh{width:39px;border-color:#006ce0;flex:none;padding-bottom:0}
.off{border-color:#b4b4bb;color:#8c8c94;gap:8px}
.blue{border-color:#006ce0;color:#006ce0}
.primary{background:#ff9900;border-color:#ff9900;color:#0f141a;gap:10px}
.b-uri{width:179px;padding-right:4px}.b-url{width:158px;padding-right:3px}.b-dl{width:163px}.b-open{width:123px}.b-del{width:108px}.b-act{width:141px}.b-new{width:163px}.b-up{width:139px;padding-right:6px}
.bluecaret{width:0;height:0;border:7px solid transparent;border-bottom:0;border-top:11px solid #006ce0;margin-left:12px}
.desc{margin:4px 0 0;line-height:25px;height:50px;white-space:nowrap;color:#0f141a}
.dl{color:#006ce0;text-decoration:underline;text-underline-offset:3px}
.linkext{color:#006ce0;vertical-align:-3px}
.filterrow{margin-top:11px;height:40px;display:flex;align-items:center}
.findbox{width:404px;height:40px;border:2px solid #8c8c94;border-radius:8px;display:flex;align-items:center;padding:0 0 1px 14px;gap:11px;color:#656871;font-style:italic;font-size:17.3px}
.toggle{width:30px;height:20px;border-radius:10px;background:#424650;margin-left:26px;padding:2px;display:flex}
.toggle i{width:16px;height:16px;border-radius:50%;background:#fff}
.togglelabel{margin-left:9px;color:#0f141a;padding-top:1px;font-size:16.7px}
.pager{margin-left:auto;display:flex;align-items:center;padding-right:6px}
.pchev{width:10px;height:18px;color:#b4b4bb;margin:0}
.flip{transform:scaleX(-1)}
.pager b{width:60px;text-align:center;font-weight:700}
.psep{width:1px;height:40px;background:#c6c6cd;margin:0 17px 0 19px}
.pgear{color:#424650}
.table{margin-top:6px}
.tr{display:grid;grid-template-columns:50px repeat(4,277px) 1fr;align-items:center}
.th{height:41px;border-bottom:2px solid #b4b4bb;font-weight:600;color:#424650;font-size:17.5px}
.c0{padding-left:16px;display:flex;align-items:center;height:24px;border-right:1.500px solid #c6c6cd}
.td .c0{border-right:0}
.cc{display:flex;align-items:center;justify-content:space-between;height:24px;padding:2px 15px 0 20px;border-right:2px solid #8c8c94}
.cc.strong{color:#0f141a;padding-right:18px}
.lastc{border-right:0;padding-right:9px}
.fi{width:14px;height:12px;color:#424650}
.sortup{width:0;height:0;border:6.500px solid transparent;border-top:0;border-bottom:10px solid #0f141a;margin-right:-1px}
.td{height:38px;border-bottom:1px solid #e8e8ec}
.noline{border-bottom:0}
.dc{padding-left:20px;display:flex;align-items:center;white-space:nowrap}
.ficon{margin-right:10px}
.right{justify-content:flex-end;padding-right:19px}

.awsfoot{height:39px;flex:none;background:#161d26;color:#fff;display:flex;align-items:center;border-top:1px solid #3a4350;padding-left:20px;font-size:14.4px}
.ft-ic{margin-right:7px}
.ft-fb{margin-left:31px}
.ft-copy{margin-left:auto;color:#c6c6cd}
.ft-r{margin-left:31px}
.ft-priv{margin-left:37px}
.ft-r:last-child{margin-right:21px}

/* taskbar */
.taskbar{height:60px;flex:none;background:#201c22;border-top:1px solid #3d3a40;display:flex;align-items:center;color:#fff;position:relative;font-family:"Open Sans",sans-serif}
.tb30{width:30px;height:30px}
.weather{width:243px;padding-left:28px;position:relative;height:40px;display:flex;align-items:center}
.wsun{width:26px;height:30px;margin-top:4px}
.temp{position:absolute;left:37px;top:0;background:#2c2c2e;border-radius:13px;padding:0 4px;font-size:13.5px;line-height:24px}
.ts-start{width:30px;height:30px;flex:none}
.ts-search{width:274px;height:40px;margin-left:16px;border-radius:20px;background:#413e44;display:flex;align-items:center;padding-left:14px;font-size:17px;color:#e6e6e6;gap:10px;position:relative}
.bear{width:64px;height:40px;position:absolute;right:4px;top:0}
.ts-apps{display:flex;margin-left:3px;flex:none}
.app{width:55px;height:58px;display:flex;align-items:center;justify-content:center;position:relative;flex:none}
.dot::after{content:"";position:absolute;left:24px;bottom:1px;width:7px;height:7px;border-radius:50%;background:#9a9a9a}
.wa-badge{position:absolute;left:26px;top:7px;width:26px;height:26px;border-radius:50%;background:#f08870;color:#141414;font-size:14px;line-height:26px;text-align:center}
.chromeapp{background:#2c2a2e;border-radius:6px}
.chromeprof{position:absolute;left:30px;top:7px;width:20px;height:26px;border-radius:50%;background:#1a1818}
.chromebar{position:absolute;left:17px;bottom:2px;width:21px;height:4px;border-radius:2px;background:#f08870}
.teams{font:700 11px "Liberation Sans",sans-serif;fill:#fff;text-anchor:middle}
.helpq{font:700 17px "Liberation Sans",sans-serif;fill:#fff;text-anchor:middle}
.ghwhite{color:#fff}
.tray{margin-left:auto;display:flex;align-items:center;padding-right:23px}
.tr-caret{width:14px;height:10px}
.tr-cloud{width:24px;height:18px;margin-left:21px}
.tr-lang{margin-left:18px;width:40px;text-align:center;font-size:14.5px;line-height:24px;color:#f0f0f0}
.tr-wifi{width:22px;height:18px;margin-left:17px}
.tr-vol{width:22px;height:20px;margin-left:7.5px}
.tr-bat{width:22px;height:14px;margin-left:8px}
.tr-clock{margin-left:21px;text-align:right;font-size:14.5px;line-height:24px;color:#f0f0f0;white-space:nowrap}
```
